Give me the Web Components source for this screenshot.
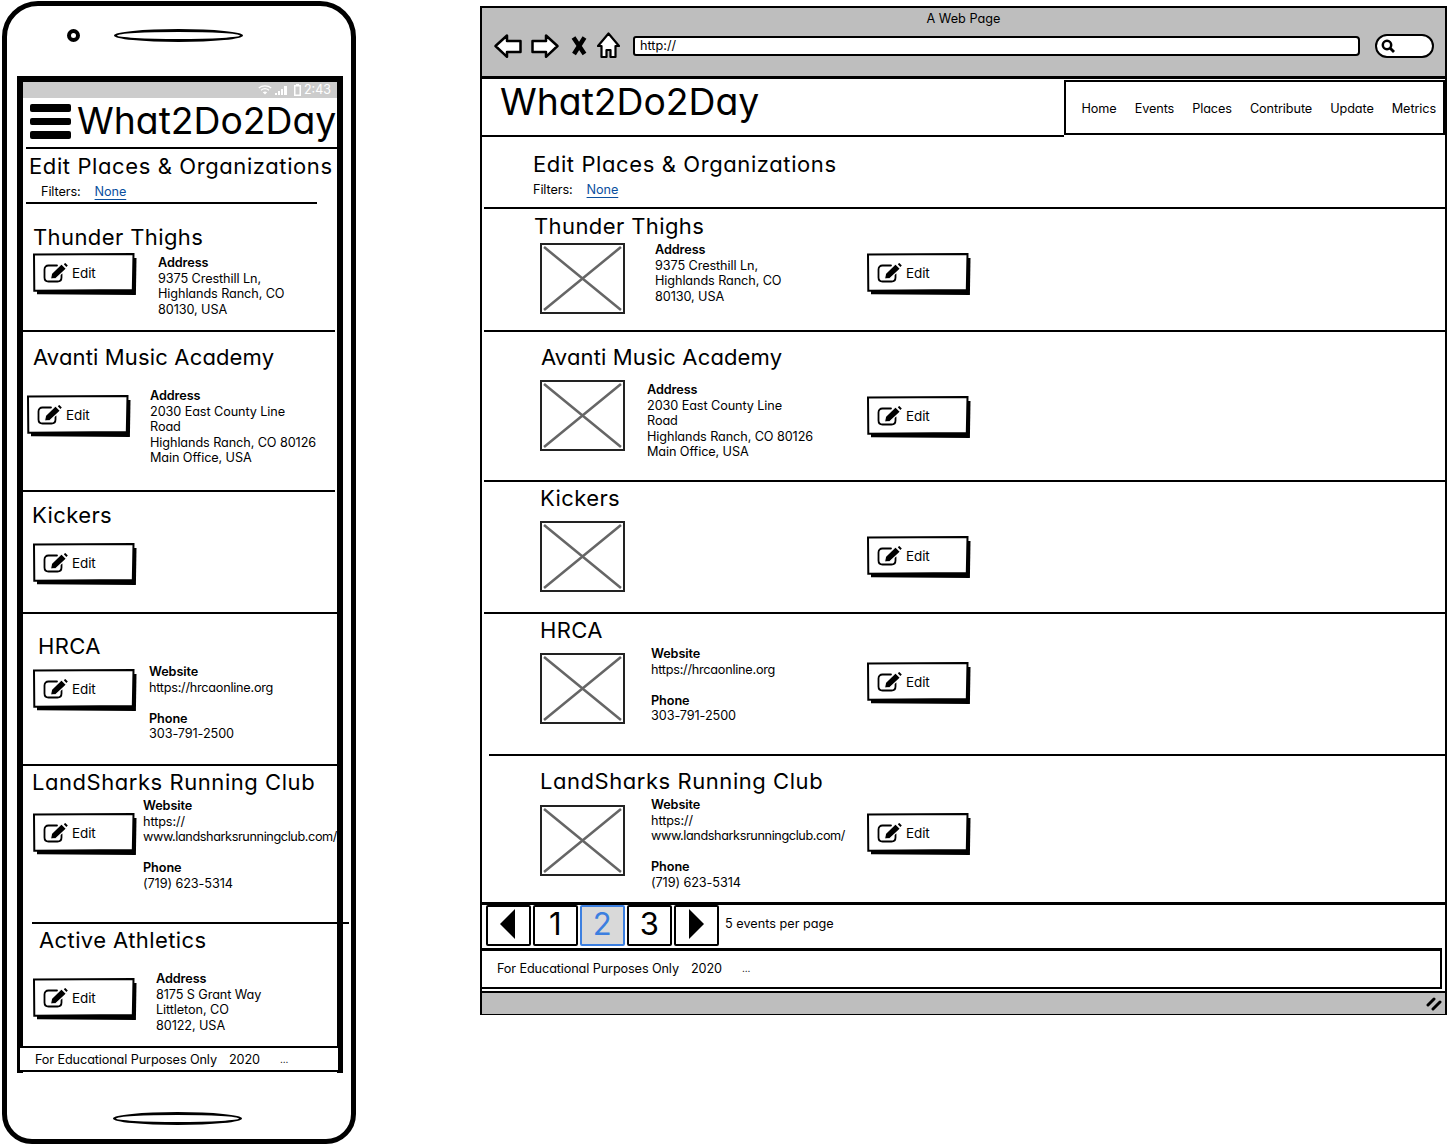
<!DOCTYPE html>
<html>
<head>
<meta charset="utf-8">
<title>What2Do2Day wireframe</title>
<style>
html, body { margin: 0; background: #fff; }
body {
    width: 1447px; height: 1145px; overflow: hidden;
    display: flex; align-items: flex-start;
    font: 12.7px/15.6px Inter, "Noto Sans", sans-serif;
    font-feature-settings: "cv11";
    color: #000;
}
b { font-weight: 600; }
.url-tight { letter-spacing: -.4px; }
.url-snug { letter-spacing: -.25px; }
</style>
</head>
<body>
<wf-phone>
    <status-bar></status-bar>
    <app-header burger></app-header>
    <page-heading style="--pl:6px; --pf:12px; --pt:3px; --h:53px; --fm:4px"></page-heading>
    <wf-rule style="--ml:3px; --mr:20px"></wf-rule>

    <place-card name="Thunder Thighs" style="--h:126px; --nt:19px; --nx:10px; --bx:10px; --c1:125px; --bt:2px; --it:3px">
        <b>Address</b><br>9375 Cresthill Ln,<br>Highlands Ranch, CO<br>80130, USA
    </place-card>
    <wf-rule style="--mr:2px"></wf-rule>
    <place-card name="Avanti Music Academy" style="--h:158px; --nt:11px; --nx:10px; --bx:4px; --c1:123px; --bt:24px; --it:16px; --ls:.15px">
        <b>Address</b><br>2030 East County Line<br>Road<br>Highlands Ranch, CO 80126<br>Main Office, USA
    </place-card>
    <wf-rule style="--mr:2px"></wf-rule>
    <place-card name="Kickers" style="--h:120px; --nt:9px; --nx:9px; --bx:10px; --c1:125px; --bt:14px; --it:0px"></place-card>
    <wf-rule style="--mr:0px"></wf-rule>
    <place-card name="HRCA" style="--h:150px; --nt:18px; --nx:15px; --bx:10px; --c1:116px; --bt:9px; --it:3px">
        <b>Website</b><br><span class="url-snug">https://hrcaonline.org</span><br><br><b>Phone</b><br>303-791-2500
    </place-card>
    <wf-rule style="--mr:0px"></wf-rule>
    <place-card name="LandSharks Running Club" style="--h:156px; --nt:2px; --nx:9px; --bx:10px; --c1:110px; --bt:17px; --it:1px; --ls:.55px">
        <b>Website</b><br>https://<br><span class="url-tight">www.landsharksrunningclub.com/</span><br><br><b>Phone</b><br>(719) 623-5314
    </place-card>
    <wf-rule style="--ml:9px; --mr:-12px"></wf-rule>
    <place-card name="Active Athletics" style="--h:122px; --nt:2px; --nx:16px; --bx:10px; --c1:123px; --bt:24px; --it:16px">
        <b>Address</b><br>8175 S Grant Way<br>Littleton, CO<br>80122, USA
    </place-card>
    <app-footer compact></app-footer>
</wf-phone>

<wf-browser>
    <app-header nav></app-header>
    <page-heading style="--pl:51px; --pf:0px; --pt:13px; --h:70px; --fm:4px"></page-heading>
    <wf-rule style="--ml:2px"></wf-rule>

    <place-card desktop name="Thunder Thighs" style="--h:121px; --nt:3px; --nx:52px; --bx:58px; --c1:115px; --c2:212px; --pt:3px; --bt:13px; --it:1px">
        <b>Address</b><br>9375 Cresthill Ln,<br>Highlands Ranch, CO<br>80130, USA
    </place-card>
    <wf-rule style="--ml:2px"></wf-rule>
    <place-card desktop name="Avanti Music Academy" style="--h:148px; --nt:11px; --nx:59px; --bx:58px; --c1:107px; --c2:220px; --pt:9px; --bt:25px; --it:10px; --ls:.15px">
        <b>Address</b><br>2030 East County Line<br>Road<br>Highlands Ranch, CO 80126<br>Main Office, USA
    </place-card>
    <wf-rule style="--ml:2px"></wf-rule>
    <place-card desktop name="Kickers" style="--h:130px; --nt:2px; --nx:58px; --bx:58px; --c1:111px; --c2:216px; --pt:9px; --bt:24px; --it:0px"></place-card>
    <wf-rule style="--ml:2px"></wf-rule>
    <place-card desktop name="HRCA" style="--h:140px; --nt:2px; --nx:58px; --bx:58px; --c1:111px; --c2:216px; --pt:9px; --bt:18px; --it:1px">
        <b>Website</b><br><span class="url-snug">https://hrcaonline.org</span><br><br><b>Phone</b><br>303-791-2500
    </place-card>
    <wf-rule style="--ml:7px"></wf-rule>
    <place-card desktop name="LandSharks Running Club" style="--h:146px; --nt:11px; --nx:58px; --bx:58px; --c1:111px; --c2:216px; --pt:10px; --bt:18px; --it:1px; --ls:.55px">
        <b>Website</b><br>https://<br><span class="url-tight">www.landsharksrunningclub.com/</span><br><br><b>Phone</b><br>(719) 623-5314
    </place-card>
    <wf-rule style="--h:3px"></wf-rule>
    <pager-bar></pager-bar>
    <app-footer></app-footer>
</wf-browser>

<script>
class WfBase extends HTMLElement {
    constructor() {
        super();
        this.attachShadow({ mode: 'open' });
        this.shadowRoot.innerHTML = this.markup();
    }
}

const editIcon = `
    <svg width="25" height="20" viewBox="0 0 25 20" fill="none">
        <path d="M14 2.500H5.500C3 2.500 1.500 4 1.500 6.500v8c0 2.500 1.500 4 4 4h9c2.500 0 4-1.500 4-4V11" stroke="#000" stroke-width="1.800" stroke-linecap="round"/>
        <path d="M7.500 16l1-5.500L18.500 .8l5 5L13 15.500z" fill="#000" stroke="#fff" stroke-width="1.200"/>
        <path d="M21.500 .6l2.600 2.600" stroke="#000" stroke-width="2"/>
    </svg>`;

class EditButton extends WfBase {
    markup() {
        return `
            <style>
                :host { display: block; position: relative; width: 103px; height: 41px; }
                svg.frame { position: absolute; left: 0; top: 0; }
                .inner { position: relative; display: flex; align-items: center; height: 40px; padding-left: 10px; gap: 4px; font-size: 13.500px; letter-spacing: -.1px; }
                .inner svg { flex: none; }
                .inner span { padding-top: 2px; }
            </style>
            <svg class="frame" width="104" height="42" viewBox="0 0 104 42">
                <path d="M4 5h99.500l-.6 37L4 41.300z" fill="#000"/>
                <path d="M1 1.500L100.500 1l-.7 36L1.300 37.800z" fill="#fff" stroke="#000" stroke-width="2"/>
            </svg>
            <div class="inner">${editIcon}<span>Edit</span></div>
        `;
    }
}

class ImgPlaceholder extends WfBase {
    markup() {
        return `
            <style>
                :host { display: block; width: 85px; height: 71px; box-sizing: border-box; border: 2.500px solid #222; background: #fff; }
                svg { display: block; width: 100%; height: 100%; }
            </style>
            <svg viewBox="0 0 80 66" preserveAspectRatio="none">
                <path d="M2 2L78 64M78 2L2 64" stroke="#666" stroke-width="2.500"/>
            </svg>
        `;
    }
}

class PlaceCard extends WfBase {
    markup() {
        const desktop = this.hasAttribute('desktop');
        return `
            <style>
                :host { display: block; height: var(--h); box-sizing: border-box; padding-top: var(--nt); }
                h3 { margin: 0 0 0 var(--nx); font-size: 22px; line-height: 28px; font-weight: 400; letter-spacing: var(--ls, .4px); white-space: nowrap; }
                .body { display: grid; grid-template-columns: var(--c1) var(--c2, auto) auto; justify-content: start; align-items: start; padding-left: var(--bx); }
                img-placeholder { margin-top: var(--pt); }
                edit-button { margin-top: var(--bt); }
                .info { margin-top: var(--it); padding-top: 1px; white-space: nowrap; letter-spacing: -.1px; }
            </style>
            <h3>${this.getAttribute('name')}</h3>
            <div class="body">
                ${desktop ? '<img-placeholder></img-placeholder>' : '<edit-button></edit-button>'}
                <div class="info"><slot></slot></div>
                ${desktop ? '<edit-button></edit-button>' : ''}
            </div>
        `;
    }
}

class WfRule extends WfBase {
    markup() {
        return `
            <style>
                :host { display: block; height: var(--h, 2px); margin: 0 var(--mr, 0) 0 var(--ml, 0); background: #000; }
            </style>
        `;
    }
}

class PageHeading extends WfBase {
    markup() {
        return `
            <style>
                :host { display: block; height: var(--h); box-sizing: border-box; padding: var(--pt) 0 0 var(--pl); }
                h2 { margin: 0; font-size: 22px; line-height: 28px; font-weight: 400; letter-spacing: .6px; white-space: nowrap; }
                .filters { display: flex; gap: 14px; margin: var(--fm) 0 0 var(--pf); letter-spacing: -.1px; }
                a { color: #0b4f9e; text-decoration: underline; text-underline-offset: 3px; }
            </style>
            <h2>Edit Places &amp; Organizations</h2>
            <div class="filters"><span>Filters:</span><a>None</a></div>
        `;
    }
}

class AppHeader extends WfBase {
    markup() {
        const burger = this.hasAttribute('burger');
        const nav = this.hasAttribute('nav');
        return `
            <style>
                :host { display: flex; }
                :host([burger]) { height: 49px; margin-left: 3px; padding-left: 4px; align-items: flex-start; gap: 6px; border-bottom: 2px solid #000; }
                :host([nav]) { height: 58px; }
                .logo { font-size: 37.300px; line-height: 44px; padding-top: 1px; white-space: nowrap; }
                .logo-wrap { flex: 1; border-bottom: 2px solid #000; padding-left: 18px; height: 58px; box-sizing: border-box; }
                :host([burger]) .logo-wrap { border: 0; padding: 0; height: auto; }
                .burger { display: flex; flex-direction: column; gap: 6px; margin-top: 6px; }
                .burger i { display: block; width: 41px; height: 7.500px; border-radius: 2px; background: #000; }
                nav { flex: none; display: flex; gap: 18px; align-items: center; width: 381px; height: 55px; box-sizing: border-box; padding: 2px 0 0 15.500px; border: 2.500px solid #000; margin-top: 1px; white-space: nowrap; letter-spacing: -.1px; }
            </style>
            ${burger ? '<div class="burger"><i></i><i></i><i></i></div>' : ''}
            <div class="logo-wrap"><div class="logo">What2Do2Day</div></div>
            ${nav ? '<nav><span>Home</span><span>Events</span><span>Places</span><span>Contribute</span><span>Update</span><span>Metrics</span></nav>' : ''}
        `;
    }
}

class StatusBar extends WfBase {
    markup() {
        return `
            <style>
                :host { display: flex; align-items: center; justify-content: flex-end; height: 16px; padding-right: 6px; background: #cccccc; color: #fff; font-size: 12.500px; }
                svg { display: block; }
            </style>
            <svg width="14" height="10" viewBox="0 0 14 10" fill="none" stroke="#fff" stroke-width="1.300"><path d="M.8 3C4.200 .2 9.800 .2 13.200 3M3 5.200C5.300 3.400 8.700 3.400 11 5.200"/><path d="M7 9.500L4.800 7.200C6 6.300 8 6.300 9.200 7.200z" fill="#fff" stroke="none"/></svg>
            <svg style="margin-left:3px" width="13" height="10" viewBox="0 0 13 10"><path d="M0 8h2v2H0zM3 6h2v4H3zM6 4h2v6H6zM9 1h3v9H9z" fill="#fff"/></svg>
            <svg style="margin:0 3px 0 6px" width="7" height="12" viewBox="0 0 7 12"><path d="M2 0h3v1h2v11H0V1h2zM1.500 2.500v8h4v-8z" fill="#fff"/></svg>
            <span>2:43</span>
        `;
    }
}

class AppFooter extends WfBase {
    markup() {
        return `
            <style>
                :host { display: flex; align-items: center; gap: 12px; box-sizing: border-box; height: 41px; padding: 0 0 0 15px; margin: 0 3px 0 0; border-top: 3px solid #000; border-bottom: 2.500px solid #000; border-right: 2px solid #000; letter-spacing: -.12px; background: #fff; }
                :host([compact]) { height: 26px; margin: 0 -3px 0 -5px; padding: 2px 0 0 15px; border: 2px solid #000; border-bottom-width: 2.500px; }
                .dots { font-size: 10px; margin-left: 8px; }
            </style>
            <span>For Educational Purposes Only</span><span>2020</span><span class="dots">...</span>
        `;
    }
}

class PagerBar extends WfBase {
    markup() {
        return `
            <style>
                :host { display: flex; align-items: flex-start; height: 41px; padding-left: 4px; gap: 2.500px; margin-bottom: 2px; }
                .p { display: flex; align-items: center; justify-content: center; box-sizing: border-box; width: 44.500px; height: 41px; padding-bottom: 3px; border: 2px solid #000; border-radius: 2px; font-size: 31px; }
                .on { background: #d9d9d9; border-color: #3c7fe0; color: #3c7fe0; }
                span { margin: 11px 0 0 4px; }
            </style>
            <div class="p"><svg width="16" height="30" viewBox="0 0 16 30"><path d="M15 0v30L0 15z" fill="#000"/></svg></div>
            <div class="p">1</div>
            <div class="p on">2</div>
            <div class="p">3</div>
            <div class="p"><svg width="16" height="30" viewBox="0 0 16 30"><path d="M1 0v30l15-15z" fill="#000"/></svg></div>
            <span>5 events per page</span>
        `;
    }
}

class WfBrowser extends WfBase {
    markup() {
        return `
            <style>
                :host { display: block; width: 967px; height: 1009px; box-sizing: border-box; margin: 6px 0 0 124px; border: 2.500px solid #000; background: #fff; }
                .chrome { height: 68px; background: #bebebe; border-bottom: 3px solid #000; }
                .title { text-align: center; padding-top: 3px; height: 15px; }
                .tools { display: flex; align-items: center; padding: 6px 0 0 12px; }
                .url { flex: none; width: 727px; height: 20px; box-sizing: border-box; margin-left: 13px; padding-left: 5px; border: 2.500px solid #000; border-radius: 3px 4px 4px 3px; background: #fff; line-height: 15px; }
                .search { flex: none; width: 59px; height: 24px; box-sizing: border-box; margin-left: 15px; border: 2.500px solid #000; border-radius: 12px; background: #fff; display: flex; align-items: center; padding-left: 4px; }
                .status { height: 21px; background: #bebebe; border-top: 2px solid #000; display: flex; justify-content: flex-end; align-items: center; padding-right: 3px; }
                .page { height: 912px; }
            </style>
            <div class="chrome">
                <div class="title">A Web Page</div>
                <div class="tools">
                    <svg width="28" height="24" viewBox="0 0 28 24" fill="#fff" stroke="#000" stroke-width="2.500" stroke-linejoin="round"><path d="M1.500 12L13 1.500V7h13.500v11H13v4.800z"/></svg>
                    <svg style="margin-left:9px" width="28" height="24" viewBox="0 0 28 24" fill="#fff" stroke="#000" stroke-width="2.500" stroke-linejoin="round"><path d="M26.500 12L15 1.500V7H1.500v11H15v4.800z"/></svg>
                    <svg style="margin-left:12px" width="16" height="20" viewBox="0 0 16 20" stroke="#000" stroke-width="4.500"><path d="M2.500 1.500L13.500 18M13.500 1.500L3 18"/></svg>
                    <svg style="margin-left:10px" width="23" height="27" viewBox="0 0 23 27" fill="#fff" stroke="#000" stroke-width="2.200" stroke-linejoin="round"><path d="M11.500 1.500L22 14h-3.500v11h-5v-7h-4v7h-5V14H1z"/></svg>
                    <div class="url">http://</div>
                    <div class="search"><svg width="14" height="14" viewBox="0 0 14 14" fill="none" stroke="#000"><circle cx="6" cy="6" r="4.200" stroke-width="2.500"/><path d="M9 9L13 13" stroke-width="2.800"/></svg></div>
                </div>
            </div>
            <div class="page"><slot></slot></div>
            <div class="status">
                <svg width="16" height="14" viewBox="0 0 16 14" stroke="#000" stroke-width="3" stroke-linecap="round"><path d="M2 8L8 2M7 12L14 5"/></svg>
            </div>
        `;
    }
}

class WfPhone extends WfBase {
    markup() {
        return `
            <style>
                :host { display: block; flex: none; width: 354px; height: 1143px; box-sizing: border-box; margin: 1px 0 0 2px; border: 5px solid #000; border-radius: 36px 36px 30px 30px; background: #fff; }
                .ear { display: flex; align-items: center; height: 70px; box-sizing: border-box; padding: 0 0 12px 60px; gap: 34px; }
                .cam { width: 13px; height: 13px; box-sizing: border-box; border: 4px solid #000; border-radius: 50%; }
                .pill { width: 129px; height: 13px; box-sizing: border-box; border: 3.500px solid #000; border-radius: 50% / 50%; }
                .screen { width: 326px; height: 997px; box-sizing: border-box; margin-left: 10px; border: 6px solid #000; border-bottom: 0; }
                .mic { display: flex; justify-content: center; margin-top: 39px; padding-right: 3px; }
            </style>
            <div class="ear"><div class="cam"></div><div class="pill"></div></div>
            <div class="screen"><slot></slot></div>
            <div class="mic"><div class="pill"></div></div>
        `;
    }
}

customElements.define('edit-button', EditButton);
customElements.define('img-placeholder', ImgPlaceholder);
customElements.define('place-card', PlaceCard);
customElements.define('wf-rule', WfRule);
customElements.define('page-heading', PageHeading);
customElements.define('app-header', AppHeader);
customElements.define('status-bar', StatusBar);
customElements.define('app-footer', AppFooter);
customElements.define('pager-bar', PagerBar);
customElements.define('wf-browser', WfBrowser);
customElements.define('wf-phone', WfPhone);
</script>
</body>
</html>
